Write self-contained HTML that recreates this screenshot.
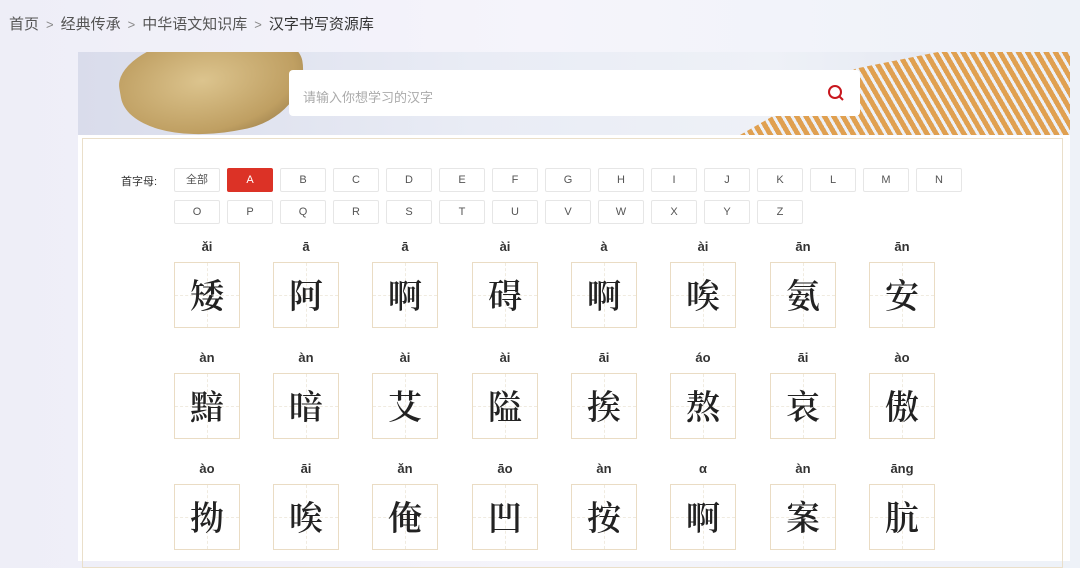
<!DOCTYPE html>
<html><head><meta charset="utf-8"><style>
*{margin:0;padding:0;box-sizing:border-box}
body{width:1080px;height:561px;overflow:hidden;background:linear-gradient(90deg,#eeeef7,#f5f4fb 50%,#eef2f8);font-family:"Liberation Sans","Noto Sans CJK SC",sans-serif;position:relative}
.bc{position:absolute;left:9px;top:13px;font-size:15px;color:#555}
.bc span{color:#888;margin:0 7px;font-size:13px}
.bc b{font-weight:normal;color:#333}
.banner{position:absolute;left:78px;top:52px;width:992px;height:83px;background:linear-gradient(90deg,#d9dceb,#e9ecf5 40%,#eef1f7 70%,#dfe3ef);overflow:hidden}
.shell{position:absolute;left:42px;top:-18px;width:185px;height:100px;background:radial-gradient(ellipse at 45% 45%,#dcc48e,#bf9f62 65%,#8a6f40);border-radius:45% 55% 40% 60%/40% 45% 60% 55%;transform:rotate(-10deg)}
.slips{position:absolute;right:0;top:0;width:330px;height:83px;background:repeating-linear-gradient(60deg,#e0a050 0 5px,#edf1f7 5px 8px);clip-path:polygon(0 100%,35% 20%,60% 0,100% 0,100% 100%)}
.search{position:absolute;left:289px;top:70px;width:571px;height:46px;background:#fff;border-radius:4px;font-size:13px;color:#aaa;padding:17px 0 0 14px}
.panel{position:absolute;left:78px;top:135px;width:992px;height:426px;background:#fff}
.inner{position:absolute;left:82px;top:138px;width:981px;height:430px;border:1px solid #eadfca}
.lbl{position:absolute;left:121px;top:173px;font-size:11px;color:#333}
.btn{position:absolute;width:46px;height:24px;border:1px solid #e6e6e6;border-radius:2px;font-size:11px;color:#555;text-align:center;line-height:22px;background:#fff}
.btn.on{background:#dc3226;border-color:#dc3226;color:#fff}
.py{position:absolute;width:66px;text-align:center;font-size:13px;font-weight:bold;color:#333}
.cell{position:absolute;width:66px;height:66px;border:1px solid #eadcc4;background:#fff;text-align:center;line-height:62px;font-size:34px;color:#222;font-family:"Noto Serif CJK SC",serif;font-weight:600}
.cell:before{content:"";position:absolute;left:32px;top:0;height:64px;border-left:1px dashed #f0ebe0}
.cell:after{content:"";position:absolute;top:32px;left:0;width:64px;border-top:1px dashed #f0ebe0}
.cell i{position:relative;z-index:1;font-style:normal}
</style></head><body>
<div class="bc">首页<span>&gt;</span>经典传承<span>&gt;</span>中华语文知识库<span>&gt;</span><b>汉字书写资源库</b></div>
<div class="banner"><div class="shell"></div><div class="slips"></div></div>
<div class="search">请输入你想学习的汉字
<svg style="position:absolute;left:538px;top:14px" width="20" height="20" viewBox="0 0 20 20"><circle cx="8" cy="8" r="6" fill="none" stroke="#c8161d" stroke-width="2"/><path d="M12.5 12.5L16 16" stroke="#c8161d" stroke-width="2"/></svg></div>
<div class="panel"></div><div class="inner"></div>
<div class="lbl">首字母:</div>
<div id="b"></div>
<script>
var L=["全部","A","B","C","D","E","F","G","H","I","J","K","L","M","N","O","P","Q","R","S","T","U","V","W","X","Y","Z"],h="";
L.forEach(function(t,i){var r=i<15?0:1,c=i<15?i:i-15;h+='<div class="btn'+(i==1?' on':'')+'" style="left:'+(174+c*53)+'px;top:'+(168+r*32)+'px">'+t+'</div>';});
var P=["ǎi","ā","ā","ài","à","ài","ān","ān","àn","àn","ài","ài","āi","áo","āi","ào","ào","āi","ǎn","āo","àn","α","àn","āng"];
var C="矮阿啊碍啊唉氨安黯暗艾隘挨熬哀傲拗唉俺凹按啊案肮";
var X=[174,273,372,472,571,670,770,869];
for(var i=0;i<24;i++){var r=Math.floor(i/8),c=i%8;h+='<div class="py" style="left:'+X[c]+'px;top:'+(239+r*111)+'px">'+P[i]+'</div><div class="cell" style="left:'+X[c]+'px;top:'+(262+r*111)+'px"><i>'+C[i]+'</i></div>';}
document.getElementById("b").innerHTML=h;
</script>
</body></html>
